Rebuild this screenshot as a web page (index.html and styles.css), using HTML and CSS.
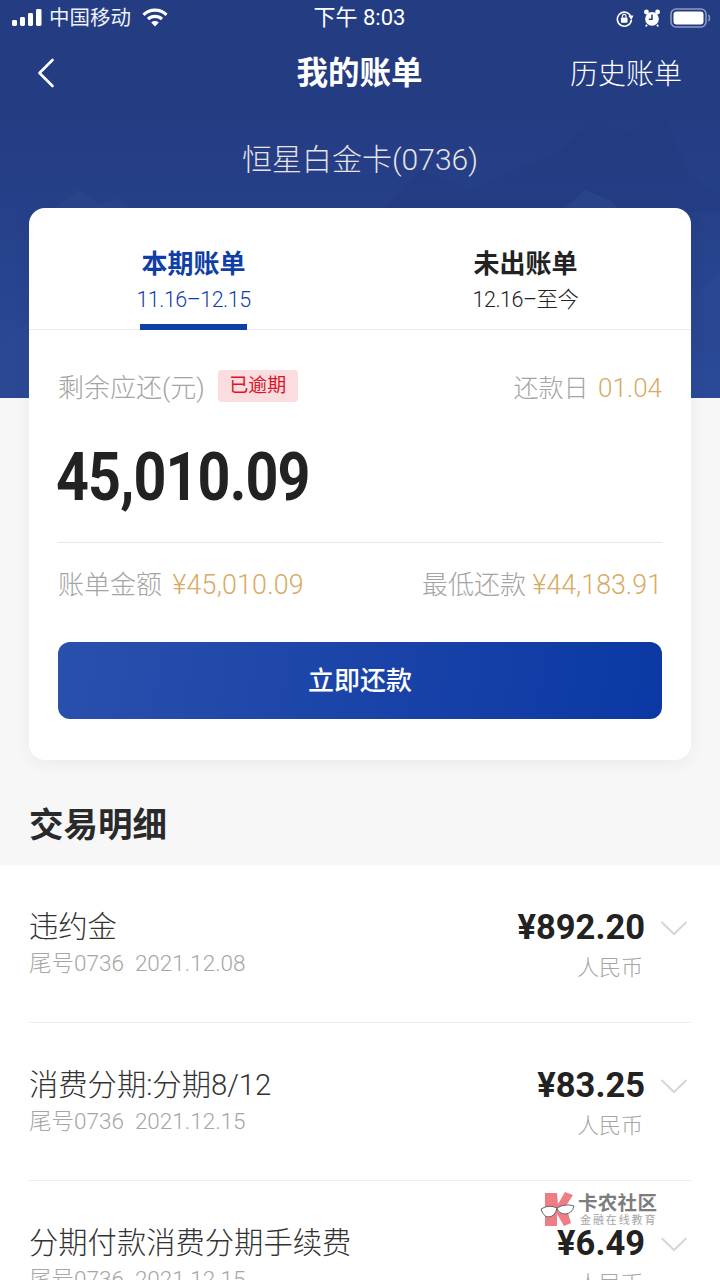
FILE: index.html
```html
<!DOCTYPE html>
<html lang="zh">
<head>
<meta charset="utf-8">
<title>我的账单</title>
<link rel="stylesheet" href="styles.css">
</head>
<body>
<div class="page">
  <div class="top">
    <svg class="mountains" viewBox="0 0 720 398" preserveAspectRatio="none" aria-hidden="true">
      <path d="M50 212 L78 190 L100 204 L118 198 L136 212 Z" fill="#2a4489"/>
      <path d="M0 350 L29 320 L29 398 L0 398 Z" fill="#2b4993"/>
      <path d="M690 300 L720 270 L720 350 L690 350 Z" fill="#2a4691"/>
      <path d="M380 212 L420 170 L470 190 L560 150 L582 132 Q600 118 622 136 L665 118 L690 175 L720 196 L720 212 Z" fill="#223a7f" opacity=".55"/>
      <path d="M560 212 L585 190 L610 200 L622 212 Z" fill="#2a4489"/>
    </svg>
    <div class="status">
      <div class="status-left">
        <svg class="signal" width="31" height="17" viewBox="0 0 31 17"><rect x="0" y="11" width="5" height="6" rx="1.4"/><rect x="8" y="8" width="5" height="9" rx="1.4"/><rect x="16" y="4" width="5" height="13" rx="1.4"/><rect x="24" y="0" width="5.5" height="17" rx="1.4"/></svg>
        <span class="carrier">中国移动</span>
        <svg class="wifi" width="26" height="19" viewBox="0 0 26 19"><path d="M1.5 6.8 A16.5 16.5 0 0 1 24.5 6.8" fill="none" stroke="#fff" stroke-width="3.2"/><path d="M6 11.2 A10 10 0 0 1 20 11.2" fill="none" stroke="#fff" stroke-width="3.2"/><path d="M9.2 14.6 A5.6 5.6 0 0 1 16.8 14.6 L13 18.6 Z" fill="#fff"/></svg>
      </div>
      <span class="clock">下午 8:03</span>
      <div class="status-right">
        <svg width="19" height="19" viewBox="0 0 20 20"><path d="M16.5 7.5 A7.4 7.4 0 1 0 17.2 11.5" fill="none" stroke="#fff" stroke-width="1.7"/><path d="M14.2 7.2 L19.5 6.8 L17.2 11.6 Z" fill="#fff"/><rect x="6.2" y="9" width="7" height="5.4" rx="1" fill="#fff"/><path d="M7.8 9 V7.5 A1.9 1.9 0 0 1 11.6 7.5 V9" fill="none" stroke="#fff" stroke-width="1.2"/></svg>
        <svg width="18" height="20" viewBox="0 0 20 21"><circle cx="10" cy="11.5" r="7.6" fill="#fff"/><circle cx="3.8" cy="3.8" r="2.7" fill="#fff"/><circle cx="16.2" cy="3.8" r="2.7" fill="#fff"/><path d="M10 6.5 V12 H6.5" fill="none" stroke="#243c82" stroke-width="1.7"/><path d="M4.5 18 L3 20 M15.5 18 L17 20" stroke="#fff" stroke-width="1.8"/></svg>
        <svg width="41" height="20" viewBox="0 0 41 20"><rect x="1" y="1" width="35" height="18" rx="5" fill="none" stroke="#8c9ac4" stroke-width="1.6"/><rect x="3.5" y="3.5" width="30" height="13" rx="3" fill="#fff"/><path d="M38.5 7 Q40.5 10 38.5 13" fill="none" stroke="#8c9ac4" stroke-width="1.5"/></svg>
      </div>
    </div>
    <div class="nav">
      <svg class="back" width="18" height="30" viewBox="0 0 18 30"><path d="M15.5 2 L2.5 15 L15.5 28" fill="none" stroke="#fff" stroke-width="2.6" stroke-linecap="round" stroke-linejoin="round"/></svg>
      <span class="nav-title">我的账单</span>
      <span class="nav-link">历史账单</span>
    </div>
    <div class="card-name">恒星白金卡(0736)</div>
    <div class="card">
      <div class="tabs">
        <div class="tab tab-active">
          <span class="tab-title">本期账单</span>
          <span class="tab-date">11.16–12.15</span>
        </div>
        <div class="tab">
          <span class="tab-title">未出账单</span>
          <span class="tab-date">12.16–至今</span>
        </div>
      </div>
      <div class="card-body">
        <div class="due-row">
          <div class="due-left"><span class="muted">剩余应还(元)</span><span class="badge">已逾期</span></div>
          <div class="due-right"><span class="muted due-label">还款日</span> <span class="gold">01.04</span></div>
        </div>
        <div class="amount"><span class="amount-text">45,010.09</span></div>
        <div class="sum-row">
          <div><span class="muted">账单金额</span> <span class="gold gold-gap">¥45,010.09</span></div>
          <div><span class="muted">最低还款</span> <span class="gold">¥44,183.91</span></div>
        </div>
        <button class="pay">立即还款</button>
      </div>
    </div>
  </div>
  <h2 class="section">交易明细</h2>
  <div class="list">
    <div class="item">
      <div class="item-left"><div class="item-name">违约金</div><div class="item-sub">尾号0736&nbsp; 2021.12.08</div></div>
      <div class="item-right"><div class="price-row"><span class="price">¥892.20</span><svg class="chev" width="28" height="16" viewBox="0 0 28 16"><path d="M1.5 2 L14 14 L26.5 2" fill="none" stroke="#d6d6d6" stroke-width="2"/></svg></div><div class="currency">人民币</div></div>
    </div>
    <div class="item">
      <div class="item-left"><div class="item-name">消费分期:分期8/12</div><div class="item-sub">尾号0736&nbsp; 2021.12.15</div></div>
      <div class="item-right"><div class="price-row"><span class="price">¥83.25</span><svg class="chev" width="28" height="16" viewBox="0 0 28 16"><path d="M1.5 2 L14 14 L26.5 2" fill="none" stroke="#d6d6d6" stroke-width="2"/></svg></div><div class="currency">人民币</div></div>
    </div>
    <div class="item item-last">
      <div class="item-left"><div class="item-name">分期付款消费分期手续费</div><div class="item-sub">尾号0736&nbsp; 2021.12.15</div></div>
      <div class="item-right"><div class="price-row"><span class="price">¥6.49</span><svg class="chev" width="28" height="16" viewBox="0 0 28 16"><path d="M1.5 2 L14 14 L26.5 2" fill="none" stroke="#d6d6d6" stroke-width="2"/></svg></div><div class="currency">人民币</div></div>
    </div>
  </div>
  <div class="watermark">
    <svg width="36" height="36" viewBox="0 0 36 36"><path d="M5 1 H17 L18 12 L25 0 L33 3 L26 14 L31 31 L24 34 L17 22 L17 34 H5 Z" fill="#ee6f7a"/><path d="M1 17 Q9 12 17 16 Q15 25 8 25 Q3 24 1 17 Z" fill="#fff" stroke="#555" stroke-width="1"/><path d="M17 16 Q25 11 34 14 Q32 22 25 22 Q19 22 17 16 Z" fill="#fff" stroke="#555" stroke-width="1"/></svg>
    <div class="wm-text"><span class="wm-title">卡农社区</span><span class="wm-sub">金融在线教育</span></div>
  </div>
</div>
</body>
</html>
```
FILE: styles.css
```css
* { box-sizing: border-box; }
html, body { margin: 0; padding: 0; }
body {
  width: 720px;
  height: 1280px;
  overflow: hidden;
  background: #fff;
  font-family: Roboto, "Noto Sans CJK SC", sans-serif;
  color: #222;
}
.page { position: relative; height: 1280px; overflow: hidden; background: #f7f7f7; }
.top {
  position: relative;
  background: linear-gradient(#243c82 0, #243c82 120px, #2a4a98 398px, #f7f7f7 398px);
  padding: 0 29px 0;
}
.mountains { position: absolute; left: 0; top: 0; width: 720px; height: 398px; }
.status, .nav, .card-name, .card { position: relative; }
.status {
  height: 36px;
  margin: 0 -29px;
  padding: 0 9px 0 12px;
  display: grid;
  grid-template-columns: 1fr auto 1fr;
  align-items: center;
  color: #fff;
}
.status-left { display: flex; align-items: center; gap: 6px; }
.signal { fill: #fff; margin-top: -1px; }
.carrier { font-size: 20.5px; line-height: 36px; color: #eef1f8; }
.wifi { margin-left: 5px; margin-top: -2px; }
.clock { font-size: 22px; line-height: 36px; margin-right: 4px; }
.status-right { display: flex; justify-content: flex-end; align-items: center; gap: 9px; }
.nav {
  height: 74px;
  display: grid;
  grid-template-columns: 1fr auto 1fr;
  align-items: center;
  color: #fff;
  padding: 0 9px 0 8px;
}
.nav-title { font-size: 31.5px; font-weight: 700; margin-bottom: 6px; }
.nav-link { font-size: 28px; justify-self: end; font-weight: 300; margin-bottom: 2px; }
.card-name {
  text-align: center;
  font-size: 30px;
  line-height: 40px;
  margin-top: 30px;
  color: #e6e4e6;
  font-weight: 300;
}
.card {
  margin-top: 28px;
  background: #fff;
  border-radius: 16px;
  box-shadow: 0 4px 16px rgba(40, 50, 80, .06);
  height: 552px;
}
.tabs { display: grid; grid-template-columns: 331px 331px; height: 122px; border-bottom: 1px solid #e9ebef; }
.tab { display: flex; flex-direction: column; align-items: center; padding-top: 38px; color: #222; height: 122px; min-width: 0; white-space: nowrap; }
.tab-title { font-size: 26px; line-height: 36px; font-weight: 700; }
.tab-date { font-size: 21.5px; line-height: 35px; font-weight: 300; letter-spacing: -.5px; }
.tab-active { color: #0f3fa6; border-bottom: 6px solid #0f3fa6; margin-left: 111px; margin-right: 113px; }
.card-body { padding: 35px 29px 0 29px; }
.due-row { display: flex; justify-content: space-between; align-items: center; height: 40px; font-size: 26px; padding-top: 1px; }
.due-left { display: flex; align-items: center; gap: 13px; }
.due-label { font-size: 25px; margin-right: 3px; }
.muted { color: #a4a4a4; font-weight: 300; }
.gold { color: #d6ab63; font-weight: 300; }
.badge {
  font-size: 19px;
  line-height: 32px;
  width: 80px;
  text-align: center;
  background: #fbdcdf;
  color: #d7162c;
  border-radius: 4px;
}
.amount { height: 137px; padding-top: 40px; }
.amount-text {
  display: inline-block;
  margin-left: -2px;
  font-size: 66px;
  line-height: 66px;
  font-weight: 700;
  color: #222;
  transform: scaleX(.87);
  transform-origin: left center;
  letter-spacing: -1px;
}
.sum-row {
  border-top: 1px solid #e9e9e9;
  display: flex;
  justify-content: space-between;
  align-items: center;
  height: 86px;
  font-size: 26px;
  padding-bottom: 6px;
  white-space: nowrap;
}
.sum-row .gold { font-size: 26.8px; }
.sum-row .gold-gap { margin-left: 4px; letter-spacing: .2px; }
.pay {
  display: block;
  width: 100%;
  height: 77px;
  margin-top: 14px;
  border: 0;
  padding: 0 0 4px;
  border-radius: 12px;
  background: linear-gradient(100deg, #2a50ad, #0b38a4);
  color: #fff;
  font-family: inherit;
  font-size: 26px;
  font-weight: 500;
}
.section { margin: 0; height: 105px; padding: 42px 29px 0; font-size: 34.5px; line-height: 46px; font-weight: 700; color: #2a2a2a; }
.list { background: #fff; padding: 0 29px; height: 420px; }
.item { display: flex; justify-content: space-between; height: 158px; border-bottom: 1px solid #eeeeee; padding-top: 39px; }
.item-last { border-bottom: 0; }
.item-name { font-size: 29.3px; line-height: 46px; color: #333; font-weight: 300; }
.item-sub { font-size: 22.5px; line-height: 34px; color: #a6a6a6; margin-top: -4px; font-weight: 300; }
.item-right { display: flex; flex-direction: column; align-items: flex-end; margin-right: 3px; }
.price-row { display: flex; align-items: center; gap: 15px; height: 46px; }
.price { font-size: 34.5px; font-weight: 700; color: #222; }
.chev { margin-top: 2px; }
.currency { font-size: 22px; line-height: 36px; color: #a6a6a6; margin-right: 45px; font-weight: 300; }
.watermark { position: absolute; left: 540px; top: 1192px; display: flex; gap: 2px; align-items: center; opacity: .9; }
.wm-text { display: flex; flex-direction: column; align-items: flex-start; }
.wm-title { font-size: 19.5px; line-height: 21px; font-weight: 700; color: #707070; letter-spacing: .3px; }
.wm-sub { font-size: 11px; line-height: 14px; color: #9a9a9a; letter-spacing: 1.9px; margin-left: 2px; }
```
